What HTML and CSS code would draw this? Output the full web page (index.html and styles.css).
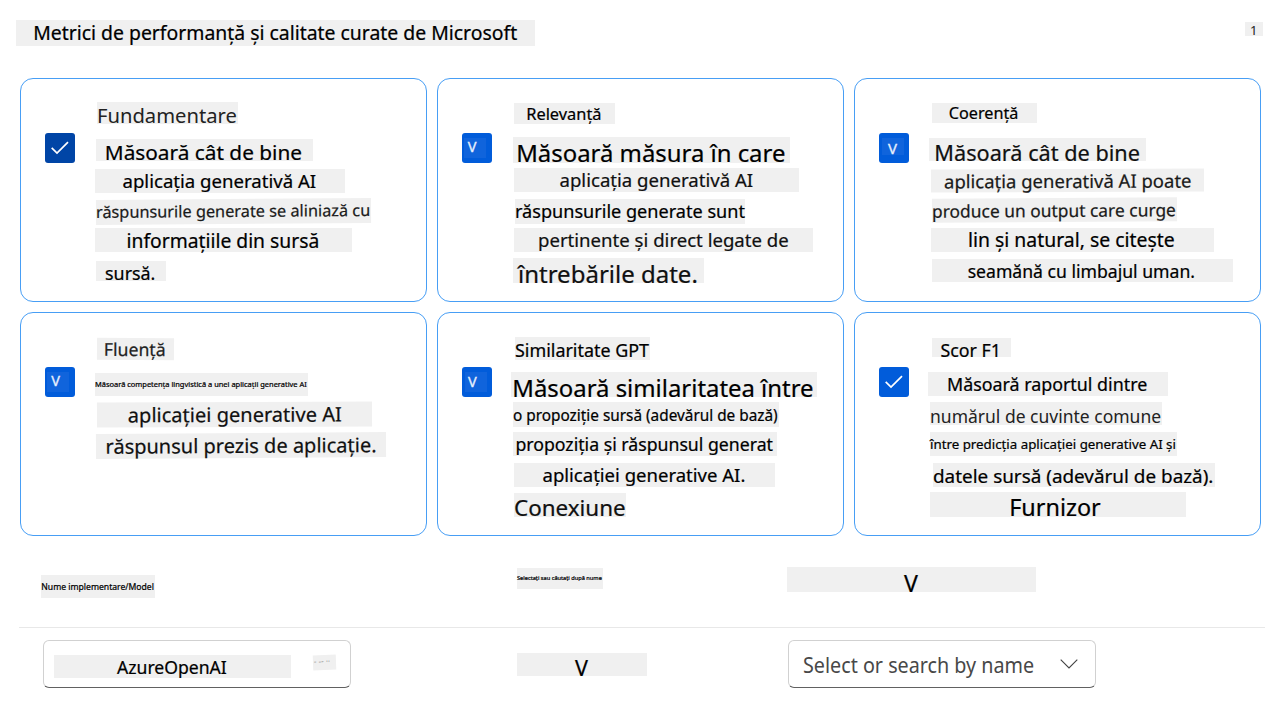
FILE: index.html
```html
<!DOCTYPE html>
<html lang="ro">
<head>
<meta charset="utf-8">
<title>Metrici de performanță și calitate</title>
<link rel="stylesheet" href="styles.css">
</head>
<body>
<header class="header">
  <h1 class="line title">Metrici de performanță și calitate curate de Microsoft</h1>
  <span class="line count">1</span>
</header>
<main class="cards">
  <section class="card grounding">
    <span class="check dark"><svg viewBox="0 0 30 30"><path d="M6.7 14.8 12 20 23 9.2"/></svg></span>
    <div class="copy">
      <h2 class="line">Fundamentare</h2>
      <p class="line">Măsoară cât de bine</p>
      <p class="line">aplicația generativă AI</p>
      <p class="line">răspunsurile generate se aliniază cu</p>
      <p class="line">informațiile din sursă</p>
      <p class="line">sursă.</p>
    </div>
  </section>
  <section class="card relevance">
    <span class="check"><span class="mark">V</span></span>
    <div class="copy">
      <h2 class="line">Relevanță</h2>
      <p class="line">Măsoară măsura în care</p>
      <p class="line">aplicația generativă AI</p>
      <p class="line">răspunsurile generate sunt</p>
      <p class="line">pertinente și direct legate de</p>
      <p class="line">întrebările date.</p>
    </div>
  </section>
  <section class="card coherence">
    <span class="check"><span class="mark">V</span></span>
    <div class="copy">
      <h2 class="line">Coerență</h2>
      <p class="line">Măsoară cât de bine</p>
      <p class="line">aplicația generativă AI poate</p>
      <p class="line">produce un output care curge</p>
      <p class="line">lin și natural, se citește</p>
      <p class="line">seamănă cu limbajul uman.</p>
    </div>
  </section>
  <section class="card fluency">
    <span class="check"><span class="mark">V</span></span>
    <div class="copy">
      <h2 class="line">Fluență</h2>
      <p class="line">Măsoară competența lingvistică a unei aplicații generative AI</p>
      <p class="line">aplicației generative AI</p>
      <p class="line">răspunsul prezis de aplicație.</p>
    </div>
  </section>
  <section class="card similarity">
    <span class="check"><span class="mark">V</span></span>
    <div class="copy">
      <h2 class="line">Similaritate GPT</h2>
      <p class="line">Măsoară similaritatea între</p>
      <p class="line">o propoziție sursă (adevărul de bază)</p>
      <p class="line">propoziția și răspunsul generat</p>
      <p class="line">aplicației generative AI.</p>
      <p class="line">Conexiune</p>
    </div>
  </section>
  <section class="card score">
    <span class="check"><svg viewBox="0 0 30 30"><path d="M6.7 14.8 12 20 23 9.2"/></svg></span>
    <div class="copy">
      <h2 class="line">Scor F1</h2>
      <p class="line">Măsoară raportul dintre</p>
      <p class="line">numărul de cuvinte comune</p>
      <p class="line">între predicția aplicației generative AI și</p>
      <p class="line">datele sursă (adevărul de bază).</p>
      <p class="line">Furnizor</p>
    </div>
  </section>
</main>
<div class="labels">
  <span class="line label-model">Nume implementare/Model</span>
  <span class="line label-select">Selectați sau căutați după nume</span>
  <span class="line label-arrow">V</span>
</div>
<div class="controls">
  <div class="select">
    <span class="line provider">AzureOpenAI</span>
    <span class="line dots">- -- ··</span>
  </div>
  <span class="line middle">V</span>
  <div class="select search">
    <span class="placeholder">Select or search by name</span>
    <svg class="chevron" viewBox="0 0 18 10"><path d="M.7.7 9 8.9 17.3.7"/></svg>
  </div>
</div>
</body>
</html>
```

FILE: styles.css
```css
* { box-sizing: border-box; }
body {
  margin: 0;
  height: 709px;
  overflow: hidden;
  background: #fff;
  color: #000;
  font-family: "Noto Sans", sans-serif;
}

/* --x/--t: offsets, --w/--h: strip size, --p: text inset,
   --fs: font size, --b: baseline measured from the top of the strip */
.line {
  display: block;
  flex: none;
  margin: var(--t, 0px) 0 0 var(--x, 0px);
  width: var(--w);
  height: var(--h);
  padding-left: var(--p, 0px);
  white-space: nowrap;
  background: #f0f0f0;
  font-weight: 400;
  font-size: var(--fs);
  line-height: calc(2 * (var(--b) - 0.388 * var(--fs)));
  -webkit-text-stroke: .22px currentColor;
}

.header { display: flex; align-items: flex-start; height: 78px; padding: 20px 25px 0 16px; justify-content: space-between; }
.title { --w: 519px; --h: 26px; --p: 17.2px; --fs: 19.4px; --b: 21px; }
.count { --w: 18px; --h: 14px; --t: 2px; --p: 5px; --fs: 13px; --b: 14px; color: #222; -webkit-text-stroke: 0; }

.cards { display: grid; grid-template-columns: repeat(3, 407px); grid-auto-rows: 224px; gap: 10px; padding-left: 20px; }
.card { display: flex; gap: 20px; padding-left: 24px; border: 1px solid #479ef5; border-radius: 13px; }
.copy { display: flex; flex-direction: column; }
.check { flex: none; width: 30px; height: 30px; margin-top: 54px; border-radius: 3px; background: #015cda; overflow: hidden; }
.check.dark { background: #0045a6; }
.check svg { display: block; fill: none; stroke: #fff; stroke-width: 1.7; }
.mark {
  display: block;
  margin: 5px 0 0 2px;
  width: 22px;
  height: 20px;
  padding-left: 3.8px;
  background: #1064dc;
  color: #e8f0fd;
  font-size: 14.5px;
  line-height: 17px;
  -webkit-text-stroke: .3px currentColor;
}
.coherence .mark { margin-left: 3px; height: 17px; padding-left: 6px; font-size: 15px; line-height: 21px; }
.fluency .mark { margin-left: 2px; padding-left: 4.2px; line-height: 16px; }
.similarity .mark { margin-left: 3px; padding-left: 3px; line-height: 18px; }

.grounding .line:nth-child(1) { --x: 2px; --t: 23px; --w: 141px; --h: 22px; --p: 0px; --fs: 20.2px; --b: 21px; color: #222; -webkit-text-stroke: 0; }
.grounding .line:nth-child(2) { --x: 1px; --t: 15px; --w: 217px; --h: 22px; --p: 8.8px; --fs: 20.8px; --b: 22px; }
.grounding .line:nth-child(3) { --x: 0px; --t: 8px; --w: 250px; --h: 24px; --p: 27.5px; --fs: 18.6px; --b: 19px; }
.grounding .line:nth-child(4) { --x: 1px; --t: 6px; --w: 275px; --h: 25px; --p: 0px; --fs: 16.3px; --b: 19px; color: #1a1a1a; transform: rotate(-.4deg); }
.grounding .line:nth-child(5) { --x: 0px; --t: 4px; --w: 257px; --h: 24px; --p: 31.5px; --fs: 19.3px; --b: 20px; }
.grounding .line:nth-child(6) { --x: 1px; --t: 9px; --w: 70px; --h: 20px; --p: 9px; --fs: 17.9px; --b: 19px; }

.relevance .line:nth-child(1) { --x: 2px; --t: 24px; --w: 101px; --h: 21px; --p: 12.2px; --fs: 16.4px; --b: 17px; }
.relevance .line:nth-child(2) { --x: 1px; --t: 13px; --w: 277px; --h: 26px; --p: 3.2px; --fs: 23.9px; --b: 25px; }
.relevance .line:nth-child(3) { --x: 2px; --t: 5px; --w: 285px; --h: 24px; --p: 45.5px; --fs: 18.6px; --b: 19px; color: #101010; }
.relevance .line:nth-child(4) { --x: 3px; --t: 7px; --w: 230px; --h: 25px; --p: 0px; --fs: 18.1px; --b: 20px; }
.relevance .line:nth-child(5) { --x: 2px; --t: 4px; --w: 299px; --h: 24px; --p: 24px; --fs: 18.6px; --b: 19px; color: #101010; }
.relevance .line:nth-child(6) { --x: 1px; --t: 6px; --w: 191px; --h: 25px; --p: 5px; --fs: 24px; --b: 25px; color: #101010; }

.coherence .line:nth-child(1) { --x: 3px; --t: 24px; --w: 105px; --h: 20px; --p: 16.8px; --fs: 16.2px; --b: 17px; }
.coherence .line:nth-child(2) { --x: 0px; --t: 15px; --w: 217px; --h: 23px; --p: 5.3px; --fs: 21.7px; --b: 23px; color: #101010; }
.coherence .line:nth-child(3) { --x: 2px; --t: 8px; --w: 273px; --h: 23px; --p: 13px; --fs: 18.5px; --b: 19px; color: #1a1a1a; transform: rotate(-.2deg); }
.coherence .line:nth-child(4) { --x: 3px; --t: 6px; --w: 245px; --h: 24px; --p: 0px; --fs: 17.4px; --b: 19px; color: #1a1a1a; transform: rotate(-.35deg); }
.coherence .line:nth-child(5) { --x: 2px; --t: 6px; --w: 283px; --h: 24px; --p: 37px; --fs: 19.4px; --b: 20px; }
.coherence .line:nth-child(6) { --x: 3px; --t: 7px; --w: 301px; --h: 23px; --p: 35.7px; --fs: 17.6px; --b: 19px; }

.fluency .line:nth-child(1) { --x: 1.5px; --t: 25px; --w: 77px; --h: 22px; --p: 6.8px; --fs: 17.7px; --b: 18px; color: #222; transform: rotate(.3deg); }
.fluency .line:nth-child(2) { --x: 0px; --t: 13px; --w: 213px; --h: 23px; --p: 0px; --fs: 7.46px; --b: 14px; }
.fluency .line:nth-child(3) { --x: 2px; --t: 6px; --w: 275px; --h: 25px; --p: 30.8px; --fs: 20.05px; --b: 21px; color: #101010; transform: rotate(-.25deg); }
.fluency .line:nth-child(4) { --x: 1px; --t: 6px; --w: 290px; --h: 25px; --p: 9.5px; --fs: 20px; --b: 21px; color: #101010; transform: rotate(-.35deg); }

.similarity .line:nth-child(1) { --x: 3px; --t: 24px; --w: 135px; --h: 23px; --p: 0px; --fs: 17.9px; --b: 20.5px; }
.similarity .line:nth-child(2) { --x: -1px; --t: 12px; --w: 306px; --h: 25px; --p: 1.3px; --fs: 23.9px; --b: 25px; }
.similarity .line:nth-child(3) { --x: 1px; --t: 5px; --w: 266px; --h: 25px; --p: 0px; --fs: 15.35px; --b: 19px; }
.similarity .line:nth-child(4) { --x: 1px; --t: 5px; --w: 264px; --h: 24px; --p: 2.4px; --fs: 17.7px; --b: 19px; }
.similarity .line:nth-child(5) { --x: 2px; --t: 7px; --w: 261px; --h: 24px; --p: 28.5px; --fs: 18.55px; --b: 19px; }
.similarity .line:nth-child(6) { --x: 2px; --t: 6px; --w: 112px; --h: 24px; --p: 0px; --fs: 22.4px; --b: 24px; color: #101010; }

.score .line:nth-child(1) { --x: 3px; --t: 25px; --w: 79px; --h: 19px; --p: 8.4px; --fs: 17.8px; --b: 19px; }
.score .line:nth-child(2) { --x: -1px; --t: 15px; --w: 240px; --h: 24px; --p: 19px; --fs: 17.85px; --b: 19px; }
.score .line:nth-child(3) { --x: 1px; --t: 6px; --w: 232px; --h: 23px; --p: 0px; --fs: 17.5px; --b: 21px; color: #222; -webkit-text-stroke: 0; }
.score .line:nth-child(4) { --x: 1px; --t: 7px; --w: 247px; --h: 24px; --p: 0px; --fs: 13.3px; --b: 18px; }
.score .line:nth-child(5) { --x: 4px; --t: 7px; --w: 282px; --h: 24px; --p: 0px; --fs: 18.9px; --b: 21px; }
.score .line:nth-child(6) { --x: 1px; --t: 5px; --w: 256px; --h: 25px; --p: 79.2px; --fs: 23.4px; --b: 25px; }

.labels { display: flex; align-items: flex-start; height: 92px; margin: 0 23px 0 19px; border-bottom: 1px solid #e8e8e8; }
.label-model { --x: 22px; --t: 39px; --w: 114px; --h: 23px; --p: .3px; --fs: 8.62px; --b: 16px; }
.label-select { --x: 362px; --t: 32px; --w: 86px; --h: 21px; --fs: 5.67px; --b: 13px; }
.label-arrow { --x: 184px; --t: 31px; --w: 249px; --h: 25px; --p: 117px; --fs: 23.2px; --b: 25px; }

.controls { display: flex; align-items: flex-start; padding: 12px 0 0 43px; }
.select {
  display: flex;
  flex: none;
  width: 308px;
  height: 48px;
  border: 1px solid #d1d1d1;
  border-bottom-color: #616161;
  border-radius: 6px;
}
.provider { --x: 10px; --t: 14px; --w: 237px; --h: 23px; --p: 63px; --fs: 17.6px; --b: 19px; }
.dots { --x: 22px; --t: 14px; --w: 23px; --h: 15px; --p: 1px; --fs: 8px; --b: 9px; color: #888; transform: rotate(-2deg); -webkit-text-stroke: 0; }
.middle { --x: 166px; --t: 13px; --w: 130px; --h: 23px; --p: 58px; --fs: 21.6px; --b: 23px; }
.search { margin-left: 141px; }
.placeholder {
  width: 257px;
  margin: 8px 0 0 14px;
  flex: none;
  color: #484848;
  font-size: 22px;
  line-height: 30px;
  white-space: nowrap;
  transform: scaleX(.897);
  transform-origin: 0 0;
}
.chevron { flex: none; width: 18px; height: 10px; margin: 18px 0 0 0; fill: none; stroke: #424242; stroke-width: 1.1; }
```
